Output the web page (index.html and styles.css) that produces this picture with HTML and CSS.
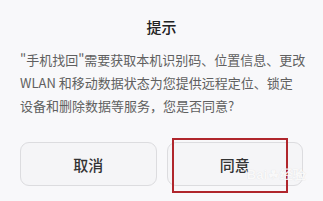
FILE: index.html
```html
<!DOCTYPE html>
<html lang="zh">
<head>
<meta charset="utf-8">
<link rel="stylesheet" href="styles.css">
</head>
<body>
<div class="dialog">
  <div class="title">提示</div>
  <p class="message">"手机找回"需要获取本机识别码、位置信息、更改<br>WLAN 和移动数据状态为您提供远程定位、锁定<br>设备和删除数据等服务，您是否同意?</p>
  <div class="actions">
    <div class="btn">取消</div>
    <div class="btn btn-agree">同意<span class="highlight"></span><span class="watermark">Bai<span class="paw">☘</span>经验</span></div>
  </div>
</div>
</body>
</html>
```
FILE: styles.css
```css
html, body {
  margin: 0;
  padding: 0;
}
body {
  width: 323px;
  height: 201px;
  overflow: hidden;
  background: #f8f8fa;
  font-family: "Noto Sans CJK SC", "Noto Sans", sans-serif;
}
.dialog {
  display: flex;
  flex-direction: column;
  padding: 0 20px;
}
.title {
  margin-top: 17px;
  text-align: center;
  font-size: 15px;
  line-height: 20px;
  font-weight: 500;
  color: #222;
}
.message {
  margin: 11px 0 0;
  font-size: 13px;
  line-height: 23px;
  color: #606060;
  white-space: nowrap;
}
.actions {
  display: flex;
  gap: 10px;
  margin-top: 25px;
}
.btn {
  position: relative;
  flex: 1;
  height: 42px;
  border: 1px solid #dcdcdf;
  border-radius: 9px;
  background: #f5f5f7;
  display: flex;
  align-items: center;
  justify-content: center;
  font-size: 15px;
  font-weight: 500;
  color: #333;
}
.highlight {
  position: absolute;
  left: 4px;
  top: -5px;
  width: 112px;
  height: 51px;
  border: 2px solid #b0262c;
}
.watermark {
  position: absolute;
  right: -4px;
  bottom: 1px;
  font-family: "Liberation Sans", sans-serif;
  font-size: 13px;
  font-weight: 700;
  color: rgba(255,255,255,0.85);
  text-shadow: 0 0 1px rgba(0,0,0,0.12);
  letter-spacing: 0;
}
.paw {
  font-size: 12px;
  margin: 0 1px;
}
```
